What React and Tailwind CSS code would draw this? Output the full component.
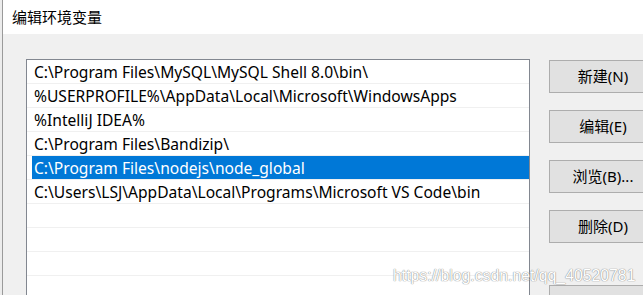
const paths = [
  'C:\\Program Files\\MySQL\\MySQL Shell 8.0\\bin\\',
  '%USERPROFILE%\\AppData\\Local\\Microsoft\\WindowsApps',
  '%IntelliJ IDEA%',
  'C:\\Program Files\\Bandizip\\',
  'C:\\Program Files\\nodejs\\node_global',
  'C:\\Users\\LSJ\\AppData\\Local\\Programs\\Microsoft VS Code\\bin',
  '',
  '',
  '',
]

function Btn({ children, className = '' }) {
  return (
    <div className={`h-[33px] w-[108px] shrink-0 border border-[#adadad] bg-[#e1e1e1] flex items-center justify-center text-[15px] text-black ${className}`}>
      {children}
    </div>
  )
}

export default function App() {
  const selected = 4
  return (
    <div className="relative w-[643px] h-[295px] overflow-hidden flex bg-[#f0f0f0] font-['Noto_Sans','Noto_Sans_CJK_SC',sans-serif]">
      <div className="w-[3px] shrink-0 bg-[#ececec] border-r border-[#9a9a9a]" />
      <div className="flex-1 flex flex-col min-w-0">
        <div className="h-[34px] shrink-0 bg-white flex items-center pl-[9px] text-[15px] text-black">
          编辑环境变量
        </div>
        <div className="flex-1 flex pl-[23px] pt-[25px]">
          <div className="w-[504px] shrink-0 border-t border-l border-r border-[#828790] bg-white">
            {paths.map((p, i) => (
              <div key={i} className="h-[24px] pl-[1px] border-b border-[#f0f0f0] flex">
                <div
                  className={`flex-1 flex items-center pt-[2px] text-[15.6px] whitespace-nowrap ${
                    i === selected ? 'bg-[#0078d7] text-white ml-[4px] pl-[2px]' : 'text-black pl-[6px]'
                  }`}
                >
                  {p}
                </div>
              </div>
            ))}
          </div>
          <div className="flex flex-col pl-[19px] pt-[1px]">
            <Btn>新建(N)</Btn>
            <Btn className="mt-[17px]">编辑(E)</Btn>
            <Btn className="mt-[17px]">浏览(B)...</Btn>
            <Btn className="mt-[17px]">删除(D)</Btn>
            <Btn className="mt-[42px]"></Btn>
          </div>
        </div>
      </div>
      <div className="absolute left-[393px] top-[266px] text-[15.8px] leading-[20px] text-white [text-shadow:0_0_1px_#8a8a8a,0_0_1px_#8a8a8a] font-['Liberation_Sans',sans-serif]">
        https://blog.csdn.net/qq_40520781
      </div>
    </div>
  )
}
